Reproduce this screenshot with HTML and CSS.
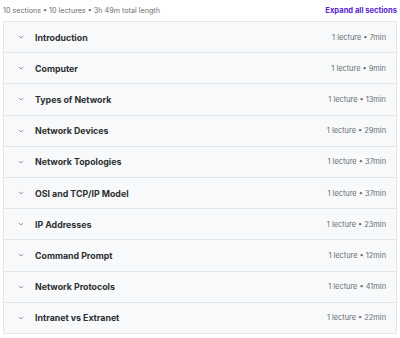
FILE: index.html
```html
<!DOCTYPE html>
<html lang="en">
<head>
    <meta charset="UTF-8">
    <meta name="viewport" content="width=device-width, initial-scale=1.0">
    <title>Course content</title>
    <link rel="stylesheet" href="styles.css">
</head>
<body>

    <!-- Summary line -->
    <div class="summary">
        <span class="summary-text">10 sections • 10 lectures • 3h 49m total length</span>
        <button class="expand-all">Expand all sections</button>
    </div>

    <!-- Sections list -->
    <div class="sections">
        <div class="section">
            <svg class="chevron" viewBox="0 0 10 6"><path d="M1.5 1.5 L5 4.5 L8.5 1.5"/></svg>
            <span class="section-title">Introduction</span>
            <span class="section-meta">1 lecture • 7min</span>
        </div>
        <div class="section">
            <svg class="chevron" viewBox="0 0 10 6"><path d="M1.5 1.5 L5 4.5 L8.5 1.5"/></svg>
            <span class="section-title">Computer</span>
            <span class="section-meta">1 lecture • 9min</span>
        </div>
        <div class="section">
            <svg class="chevron" viewBox="0 0 10 6"><path d="M1.5 1.5 L5 4.5 L8.5 1.5"/></svg>
            <span class="section-title">Types of Network</span>
            <span class="section-meta">1 lecture • 13min</span>
        </div>
        <div class="section">
            <svg class="chevron" viewBox="0 0 10 6"><path d="M1.5 1.5 L5 4.5 L8.5 1.5"/></svg>
            <span class="section-title">Network Devices</span>
            <span class="section-meta">1 lecture • 29min</span>
        </div>
        <div class="section">
            <svg class="chevron" viewBox="0 0 10 6"><path d="M1.5 1.5 L5 4.5 L8.5 1.5"/></svg>
            <span class="section-title">Network Topologies</span>
            <span class="section-meta">1 lecture • 37min</span>
        </div>
        <div class="section">
            <svg class="chevron" viewBox="0 0 10 6"><path d="M1.5 1.5 L5 4.5 L8.5 1.5"/></svg>
            <span class="section-title">OSI and TCP/IP Model</span>
            <span class="section-meta">1 lecture • 37min</span>
        </div>
        <div class="section">
            <svg class="chevron" viewBox="0 0 10 6"><path d="M1.5 1.5 L5 4.5 L8.5 1.5"/></svg>
            <span class="section-title">IP Addresses</span>
            <span class="section-meta">1 lecture • 23min</span>
        </div>
        <div class="section">
            <svg class="chevron" viewBox="0 0 10 6"><path d="M1.5 1.5 L5 4.5 L8.5 1.5"/></svg>
            <span class="section-title">Command Prompt</span>
            <span class="section-meta">1 lecture • 12min</span>
        </div>
        <div class="section">
            <svg class="chevron" viewBox="0 0 10 6"><path d="M1.5 1.5 L5 4.5 L8.5 1.5"/></svg>
            <span class="section-title">Network Protocols</span>
            <span class="section-meta">1 lecture • 41min</span>
        </div>
        <div class="section">
            <svg class="chevron" viewBox="0 0 10 6"><path d="M1.5 1.5 L5 4.5 L8.5 1.5"/></svg>
            <span class="section-title">Intranet vs Extranet</span>
            <span class="section-meta">1 lecture • 22min</span>
        </div>
    </div>

</body>
</html>
```

FILE: styles.css
```css
/* Base */
body {
    margin: 0;
    padding: 0 3px 0 3px;
    background: #ffffff;
    font-family: Inter, "Noto Sans", sans-serif;
    color: #2d2f31;
}

/* Summary line */
.summary {
    display: flex;
    justify-content: space-between;
    align-items: center;
    height: 21px;
}

.summary-text {
    font-size: 7.2px;
    color: #6a6f73;
}

.expand-all {
    background: none;
    border: none;
    padding: 0;
    font-family: inherit;
    font-size: 7.6px;
    font-weight: 700;
    color: #5624d0;
    cursor: pointer;
}

/* Sections list */
.sections {
    border: 1px solid #e2e6e9;
}

.section {
    display: flex;
    align-items: center;
    height: 30.2px;
    padding: 0 10px 0 14px;
    background: #f7f9fa;
    border-bottom: 1px solid #e2e6e9;
}

.section:last-child {
    border-bottom: none;
}

.chevron {
    width: 6px;
    height: 4px;
    fill: none;
    stroke: #6a6f73;
    stroke-width: 1.2;
    margin-right: 11px;
}

.section-title {
    flex: 1;
    font-size: 8.8px;
    font-weight: 700;
}

.section-meta {
    font-size: 7.4px;
    color: #6a6f73;
}
```
